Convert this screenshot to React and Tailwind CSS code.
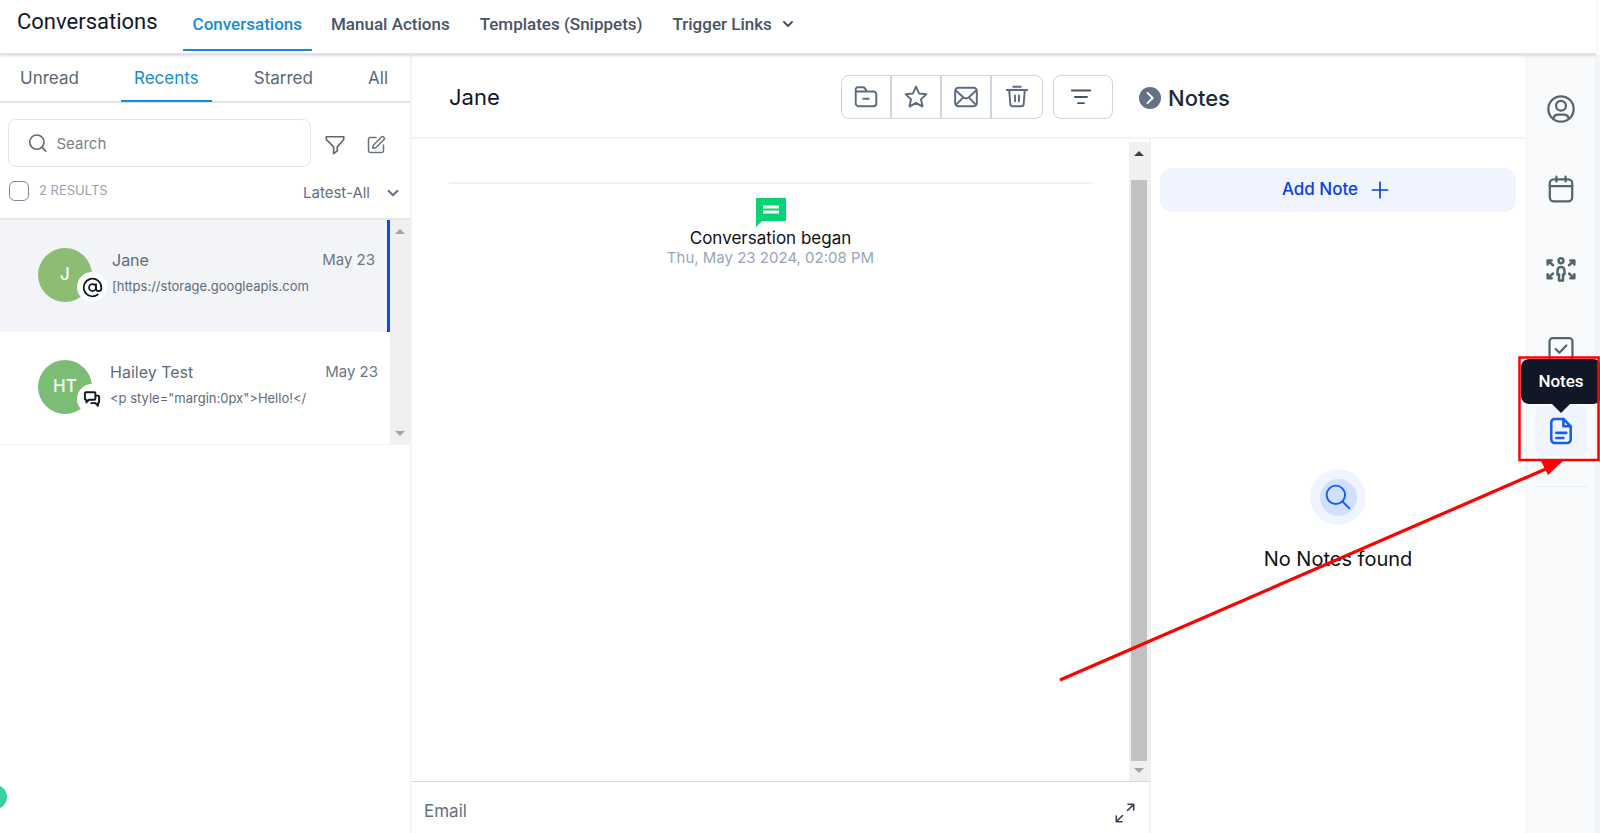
import React, { useState } from 'react';
import { ChevronDown, Search, AtSign, SquarePen } from 'lucide-react';

const NAV_LINKS = ['Conversations', 'Manual Actions', 'Templates (Snippets)'];

const CONVERSATIONS = [
  {
    id: 1,
    name: 'Jane',
    initials: 'J',
    date: 'May 23',
    preview: '[https://storage.googleapis.com',
    color: 'bg-[#8dbd75]',
    channel: 'email'
  },
  {
    id: 2,
    name: 'Hailey Test',
    initials: 'HT',
    date: 'May 23',
    preview: '<p style="margin:0px">Hello!</',
    color: 'bg-[#7bbd75]',
    channel: 'chat'
  }
];

function Icon({ size = 24, stroke = 2, className = '', children }) {
  return (
    <svg
      width={size}
      height={size}
      viewBox="0 0 24 24"
      fill="none"
      stroke="currentColor"
      strokeWidth={stroke}
      strokeLinecap="round"
      strokeLinejoin="round"
      className={className}
      aria-hidden="true"
    >
      {children}
    </svg>
  );
}

const FolderIcon = () => (
  <Icon size={26} stroke={1.8}>
    <path d="M2.5 7.5V5a2 2 0 0 1 2-2h4.7a2 2 0 0 1 1.6.8L13 7h6a2.5 2.5 0 0 1 2.5 2.5V18a2.5 2.5 0 0 1-2.5 2.5H5A2.5 2.5 0 0 1 2.5 18V7H13M9.5 13.7h5" />
  </Icon>
);

const StarIcon = () => (
  <Icon size={26} stroke={1.8}>
    <path d="M12 2.4l2.8 6.3 6.8.8-5 4.7 1.4 6.6L12 17.4l-6 3.4 1.4-6.6-5-4.7 6.8-.8z" />
  </Icon>
);

const MailIcon = () => (
  <Icon size={26} stroke={1.8}>
    <rect x="2" y="3.5" width="20" height="17" rx="3" />
    <path d="M2.6 6l6.8 6.2c1.6 1.3 3.6 1.3 5.2 0L21.4 6M3 19l6.2-6.4M21 19l-6.2-6.4" />
  </Icon>
);

const TrashIcon = () => (
  <Icon size={26} stroke={1.8}>
    <path d="M8.5 2.6h7M2.6 5.6h18.8M4.8 5.6l1 12.6a2.4 2.4 0 0 0 2.4 2.4h7.6a2.4 2.4 0 0 0 2.4-2.4l1-12.6M10.2 10.5v5.5M13.8 10.5v5.5" />
  </Icon>
);

const THREAD_ACTIONS = [
  { label: 'Archive', icon: <FolderIcon /> },
  { label: 'Star', icon: <StarIcon /> },
  { label: 'Mark unread', icon: <MailIcon /> },
  { label: 'Delete', icon: <TrashIcon /> }
];

const RAIL_ITEMS = [
  {
    label: 'Contact',
    icon: (
      <Icon size={32} stroke={1.7}>
        <circle cx="12" cy="12" r="9.5" />
        <circle cx="12" cy="9.6" r="3.7" />
        <path d="M6.2 19.2c.4-2 1.8-2.9 3.6-2.9h4.4c1.8 0 3.2.9 3.6 2.9" />
      </Icon>
    )
  },
  {
    label: 'Appointments',
    icon: (
      <Icon size={32} stroke={1.7}>
        <rect x="3.6" y="4.8" width="16.8" height="16.4" rx="3" />
        <path d="M3.6 9.8h16.8M8.6 2.8v3.6M15.4 2.8v3.6" />
      </Icon>
    )
  },
  {
    label: 'Opportunities',
    icon: (
      <Icon size={32} stroke={1.9}>
        <circle cx="12" cy="5.8" r="1.8" />
        <path d="M10.5 20.6v-4.5H9.4v-3a2.6 2.6 0 0 1 5.2 0v3h-1.1v4.5z" />
        <path d="M2 8.6V5.6h3M2.2 5.8L6 9.2M22 8.6V5.6h-3M21.800 5.8L18 9.2M2 16v3h3M2.200 18.8L6 15.400M22 16v3h-3M21.800 18.8L18 15.400" />
      </Icon>
    )
  },
  {
    label: 'Tasks',
    icon: (
      <Icon size={32} stroke={1.7}>
        <rect x="3.4" y="3.8" width="17.2" height="17.2" rx="2.4" />
        <path d="M8 12l2.8 2.8 5.2-5.4" />
      </Icon>
    )
  }
];

function ScrollBar({ thumb, upClass }) {
  return (
    <div className="flex w-5 shrink-0 flex-col items-center justify-between bg-[#f0f0f0]" aria-hidden="true">
      <svg width="10" height="24" viewBox="0 0 10 24" className={upClass}>
        <path d="M0 14L5 9l5 5z" fill="currentColor" />
      </svg>
      {thumb && <div className="mt-[14px] w-4 flex-1 bg-[#c1c1c1]" />}
      <svg width="10" height="20" viewBox="0 0 10 20" className="text-[#a3a3a3]">
        <path d="M0 7l5 5 5-5z" fill="currentColor" />
      </svg>
    </div>
  );
}

function TopNav() {
  return (
    <header className="relative z-10 mr-1 flex h-[55px] shrink-0 items-start border-b-2 border-[#dde3e8] bg-white pl-[17px] font-[Roboto,sans-serif] shadow-sm">
      <h1 className="mt-1 text-[22px] leading-9 text-[#101828]">Conversations</h1>
      <nav className="ml-[25px] flex text-[17px] leading-6 font-medium text-[#475467]">
        {NAV_LINKS.map((link, i) => (
          <a
            key={link}
            href="#"
            className={
              i === 0
                ? 'mr-1 h-[51px] border-b-2 border-[#188bd6] px-[10px] pt-3 text-[#188bd6]'
                : 'h-[51px] px-[15px] pt-3'
            }
          >
            {link}
          </a>
        ))}
        <button type="button" className="flex h-12 items-center gap-2 px-[15px]">
          Trigger Links
          <ChevronDown size={16} strokeWidth={3} />
        </button>
      </nav>
    </header>
  );
}

function ConversationItem({ item, active, onSelect }) {
  return (
    <li>
      <button
        type="button"
        onClick={onSelect}
        className={`flex h-28 w-full items-start pt-7 pr-3 pl-[38px] text-left text-[#5f6b7a] ${
          active ? 'border-r-3 border-[#0b4fe0] bg-[#f2f4f7]' : 'bg-white'
        }`}
      >
        <span className={`relative flex size-[54px] shrink-0 items-center justify-center rounded-full text-[17px] font-medium text-white ${item.color}`}>
          {item.initials}
          <span className="absolute -right-[15px] bottom-0 flex size-[30px] items-center justify-center rounded-full bg-white text-[#101828]">
            {item.channel === 'email' ? (
              <AtSign size={21} strokeWidth={2} />
            ) : (
              <Icon size={18} stroke={2.6}>
                <path d="M4 3h11a1.5 1.5 0 0 1 1.5 1.5v7A1.5 1.5 0 0 1 15 13H8l-3.500 3.500V13H4a1.5 1.5 0 0 1-1.5-1.5v-7A1.5 1.5 0 0 1 4 3z" />
                <path d="M17 7.5h3A1.5 1.5 0 0 1 21.5 9v7a1.5 1.5 0 0 1-1.5 1.5V21l-3.5-3.500H11" />
              </Icon>
            )}
          </span>
        </span>
        <span className={`min-w-0 flex-1 ${active ? 'ml-5' : 'ml-[18px]'}`}>
          <span className="flex items-start justify-between">
            <span className="text-base leading-6">{item.name}</span>
            <span className="text-[15px] leading-6 text-[#6b7785]">{item.date}</span>
          </span>
          <span className="mt-0.5 block w-[200px] overflow-hidden text-[13px] leading-6 whitespace-nowrap">{item.preview}</span>
        </span>
      </button>
    </li>
  );
}

function ConversationList() {
  const [tab, setTab] = useState('Recents');
  const [selected, setSelected] = useState(1);

  return (
    <aside className="relative flex w-[412px] shrink-0 flex-col border-r-2 border-[#f2f4f7]">
      <div className="flex h-12 justify-between border-b-2 border-[#dfe3e8] pr-[9px] pl-[7px] text-[17px] text-[#5b6779]">
        {['Unread', 'Recents', 'Starred', 'All'].map((name) => (
          <button
            key={name}
            type="button"
            onClick={() => setTab(name)}
            className={`h-[47px] border-b-2 px-[13px] pt-[3px] ${
              tab === name ? 'border-[#188bd6] text-[#188bd6]' : 'border-transparent'
            }`}
          >
            {name}
          </button>
        ))}
      </div>

      <div className="flex items-center pt-4 pr-6 pl-2">
        <label className="flex h-12 flex-1 items-center rounded-lg border border-[#e1e5ea] pl-[18px] text-[#5f6c75]">
          <Search size={24} strokeWidth={1.8} />
          <input
            type="text"
            placeholder="Search"
            aria-label="Search"
            className="ml-2 w-full min-w-0 bg-transparent pt-0.5 text-[15px] outline-none placeholder:text-[#7b8087]"
          />
        </label>
        <button type="button" aria-label="Filter" className="mt-1 ml-[13px] text-[#5f6670]">
          <Icon size={22} stroke={1.8}>
            <path d="M2.500 3h19v3l-7 8v4.500L10.500 21.500V14L2.500 6z" />
          </Icon>
        </button>
        <button type="button" aria-label="Compose" className="mt-1 ml-5 text-[#6b717b]">
          <SquarePen size={20} strokeWidth={1.8} />
        </button>
      </div>

      <div className="flex h-[53px] items-center justify-between border-b-2 border-[#e4e7ec] pr-2 pb-[3px] pl-[9px]">
        <label className="flex items-center gap-[10px] text-[13px] text-[#98a2b3]">
          <input type="checkbox" className="size-5 appearance-none rounded-md border border-[#7c8798] bg-white checked:bg-blue-600" />
          2 RESULTS
        </label>
        <button type="button" className="mt-1 flex items-center gap-[14px] text-[15px] text-[#667085]">
          Latest-All
          <ChevronDown size={18} strokeWidth={2.6} />
        </button>
      </div>

      <div className="flex border-b border-[#f0f1f3]">
        <ul className="min-w-0 flex-1">
          {CONVERSATIONS.map((item) => (
            <ConversationItem
              key={item.id}
              item={item}
              active={selected === item.id}
              onSelect={() => setSelected(item.id)}
            />
          ))}
        </ul>
        <ScrollBar upClass="text-[#a3a3a3]" />
      </div>

      {/* floating launcher, mostly off the left edge */}
      <div className="absolute bottom-6 -left-[17px] size-6 rounded-full bg-[#37d399]" />
    </aside>
  );
}

function Thread() {
  return (
    <section className="flex min-w-0 flex-1 flex-col">
      <div className="flex h-[84px] items-center border-b-2 border-[#f2f4f7] pt-0.5 pr-9 pl-[37px]">
        <h2 className="flex-1 text-[22px] text-[#101828]">Jane</h2>
        <div className="flex h-11 divide-x-2 divide-[#d0d5dd] rounded-lg border border-[#d0d5dd] text-[#5d6b82]">
          {THREAD_ACTIONS.map((action) => (
            <button key={action.label} type="button" aria-label={action.label} className="flex w-[50px] items-center justify-center">
              {action.icon}
            </button>
          ))}
        </div>
        <button
          type="button"
          aria-label="Filter messages"
          className="ml-[10px] flex h-11 w-[60px] items-center justify-center rounded-lg border border-[#d0d5dd] pr-1 text-[#475467]"
        >
          <Icon size={24} stroke={1.8}>
            <path d="M2.8 5.5h18.4M6 12h12M9 18.2h6" />
          </Icon>
        </button>
      </div>

      <div className="flex flex-1 pt-[3px]">
        <div className="flex-1 pt-10 pr-[37px] pl-[37px]">
          <div className="flex flex-col items-center border-t-2 border-[#f0f1f3] pt-[14px]">
            <svg width="30" height="30" viewBox="0 0 30 30" aria-hidden="true">
              <path d="M0 0h30v23H6L0 29z" fill="#06d373" />
              <path d="M7 7.5h16v3H7zM7 12.5h16v3H7z" fill="#fff" />
            </svg>
            <p className="text-[17px] leading-5 text-[#101114]">Conversation began</p>
            <p className="text-[15px] leading-5 text-[#98a5b8]">Thu, May 23 2024, 02:08 PM</p>
          </div>
        </div>
        <ScrollBar thumb upClass="text-[#404040]" />
      </div>

      <div className="flex h-[52px] items-center justify-between border-t border-[#d5d9e0] px-3 pt-2">
        <button type="button" className="text-[17px] text-[#667085]">Email</button>
        <button type="button" aria-label="Expand composer" className="mt-0.5 text-[#344054]">
          <Icon size={24} stroke={1.6}>
            <path d="M14.5 9.5l6-6M15 3.2h5.7V9M9.5 14.5l-6 6M9 20.8H3.3V15" />
          </Icon>
        </button>
      </div>
    </section>
  );
}

function NotesPanel() {
  return (
    <section className="flex w-[377px] shrink-0 flex-col">
      <div className="-ml-[10px] flex h-[84px] items-center gap-[7px] border-b-2 border-[#f2f4f7] pt-1">
        <button type="button" aria-label="Collapse notes">
          <svg width="22" height="22" viewBox="0 0 22 22" fill="none">
            <circle cx="11" cy="11" r="11" fill="#667085" />
            <path d="M8.5 5.8l5.2 5.2-5.2 5.2" stroke="#fff" strokeWidth="1.8" strokeLinecap="round" strokeLinejoin="round" />
          </svg>
        </button>
        <h2 className="text-[22px] font-medium text-[#1d2939]">Notes</h2>
      </div>
      <div className="flex flex-1 flex-col border-l-2 border-[#f0f1f3] pt-[29px] pr-[10px] pl-[9px]">
        <button type="button" className="flex h-11 items-center justify-center gap-3 rounded-xl bg-[#eff4ff] pr-1 text-[17px] font-medium text-[#0b40e0]">
          Add Note
          <Icon size={20} stroke={2}>
            <path d="M12 2.8v18.4M2.8 12h18.4" />
          </Icon>
        </button>
        <div className="mt-[257px] flex flex-col items-center">
          <span className="flex size-14 items-center justify-center rounded-full bg-[#eff4ff]">
            <span className="flex size-[37px] items-center justify-center rounded-full bg-[#d1e0ff] text-[#155eef]">
              <Icon size={26} stroke={1.8}>
                <circle cx="10" cy="10" r="8.5" />
                <path d="M16.2 16.2l6.3 6.3" />
              </Icon>
            </span>
          </span>
          <p className="mt-5 text-xl leading-7 text-[#101114]">No Notes found</p>
        </div>
      </div>
    </section>
  );
}

function SideRail() {
  return (
    <aside className="flex shrink-0 border-l border-[#f0f2f5] bg-[#f9fafb]">
      <div className="flex w-[68px] flex-col items-center gap-12 pt-[38px] text-[#53666e]">
        {RAIL_ITEMS.map((item) => (
          <button key={item.label} type="button" aria-label={item.label}>
            {item.icon}
          </button>
        ))}
        <div className="relative -mt-[7px] flex w-[52px] flex-col border-b border-[#e8ebef] pb-[30px]">
          <button
            type="button"
            aria-labelledby="notes-tip"
            className="flex h-[50px] items-center justify-center rounded-lg bg-[#eff4ff] text-[#155eef]"
          >
            <Icon size={32} stroke={1.9}>
              <path d="M13.8 3H7.3a2.600 2.600 0 0 0-2.600 2.600v12.800A2.600 2.600 0 0 0 7.300 21h9.400a2.600 2.600 0 0 0 2.600-2.600V8.500z" />
              <path d="M13.8 3v5.500h5.500M8.500 13.400h7.500M8.500 17.200h5.300" />
            </Icon>
          </button>
          <div
            id="notes-tip"
            role="tooltip"
            className="absolute -top-[47px] left-1/2 flex h-[45px] w-20 -translate-x-1/2 items-center justify-center rounded-lg bg-[#101828] font-[Roboto,sans-serif] text-[17px] font-medium text-white"
          >
            Notes
            <svg width="18" height="9" viewBox="0 0 18 9" className="absolute top-full" aria-hidden="true">
              <path d="M0 0h18L9 9z" fill="#101828" />
            </svg>
          </div>
        </div>
      </div>
      <div className="w-[5px] bg-[#f2f5f8]" />
    </aside>
  );
}

// Red box and arrow that point at the Notes button in the rail
function Callout() {
  return (
    <svg
      width="560"
      height="340"
      viewBox="0 0 560 340"
      fill="none"
      className="pointer-events-none absolute top-[350px] right-0 z-20"
      aria-hidden="true"
    >
      <rect x="479.5" y="7.5" width="79" height="102.5" stroke="#f00" strokeWidth="2.5" />
      <path d="M20 330L508 118" stroke="#f00" strokeWidth="3.2" />
      <path d="M501 111h22l-15 14z" fill="#f00" />
    </svg>
  );
}

export default function App() {
  return (
    <div className="relative flex min-h-screen flex-col overflow-hidden bg-white font-[Inter,sans-serif]">
      <TopNav />
      <main className="flex flex-1">
        <ConversationList />
        <Thread />
        <NotesPanel />
        <SideRail />
      </main>
      <Callout />
    </div>
  );
}
